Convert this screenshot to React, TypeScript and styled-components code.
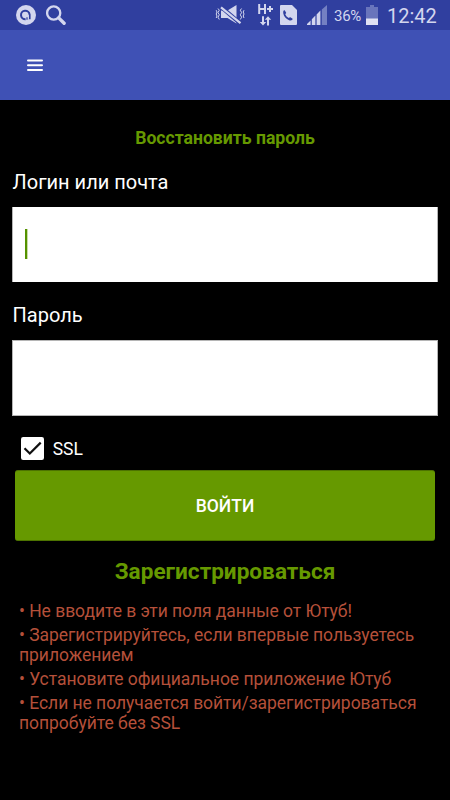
import React from "react"
import styled, { createGlobalStyle } from "styled-components"

const GlobalStyle = createGlobalStyle`
  * {
    box-sizing: border-box;
  }

  body {
    margin: 0;
    background: #000;
    font-family: Roboto, "Noto Sans", sans-serif;
  }
`

const Screen = styled.div`
  width: 450px;
  height: 800px;
  display: flex;
  flex-direction: column;
  overflow: hidden;
  background: #000;
  color: #fff;
`

const StatusBar = styled.div`
  height: 30px;
  flex: none;
  display: flex;
  align-items: center;
  justify-content: space-between;
  padding: 0 14px 0 16px;
  background: #303f9f;
  color: #d3d6ee;
`

const StatusGroup = styled.div`
  display: flex;
  align-items: center;
`

const Icon = styled.svg<{ $gap?: number }>`
  display: block;
  flex: none;
  margin-right: ${props => props.$gap || 0}px;
`

const Battery = styled.span`
  width: 28px;
  margin-right: 4px;
  font-size: 15px;
  line-height: 30px;
  letter-spacing: -0.3px;
  white-space: nowrap;
  padding-top: 2px;
`

const Clock = styled.span`
  width: 49px;
  font-size: 20px;
  line-height: 30px;
  white-space: nowrap;
  padding-top: 2px;
`

const Toolbar = styled.header`
  height: 70px;
  flex: none;
  display: flex;
  align-items: center;
  padding-left: 27px;
  background: #3f51b5;
`

const MenuButton = styled.button`
  padding: 0;
  border: 0;
  background: none;
`

const Form = styled.form`
  display: flex;
  flex-direction: column;
  padding: 26px 12px 0;
`

const Link = styled.a<{ $large?: boolean }>`
  align-self: center;
  color: #669900;
  font-weight: bold;
  font-size: ${props => (props.$large ? 22.6 : 17.6)}px;
  line-height: 24px;
  margin-top: ${props => (props.$large ? 19 : 0)}px;
`

const Label = styled.label`
  font-size: 20px;
  line-height: 24px;
  margin-top: 20px;
  padding-left: 0.6px;
`

const Field = styled.div<{ $last?: boolean }>`
  height: ${props => (props.$last ? 76 : 75)}px;
  display: flex;
  align-items: center;
  margin: 13px 0 ${props => (props.$last ? 20 : 1)}px;
  padding-left: 13px;
  background: #fff;
  border: solid #b5b5b5;
  border-width: ${props => (props.$last ? "1px" : "0 1px")};
`

const Caret = styled.span`
  width: 2px;
  height: 30px;
  margin: 0 0 1px -1px;
  background: #559200;
  box-shadow: 1px 0 #c9dda5;
`

const CheckRow = styled.div`
  height: 24px;
  display: flex;
  align-items: center;
  padding-left: 9px;
  font-size: 17.5px;
`

const CheckLabel = styled.span`
  padding: 1px 0 0 0.7px;
`

const Submit = styled.button`
  height: 71px;
  margin: 10px 3px 0;
  padding: 0;
  border: solid #4d7300;
  border-width: 1px 0;
  border-radius: 3px;
  background: #669900;
  color: #fff;
  font: 500 17.5px/24px Roboto, "Noto Sans", sans-serif;
`

const Notes = styled.div`
  padding: 17px 7px 0;
  color: #b5503a;
  font-size: 17.5px;
  line-height: 20.5px;
  letter-spacing: -0.035px;
`

const Note = styled.p`
  margin: 0 0 3.3px;
  white-space: nowrap;
`

const App: React.FC = () => (
  <Screen>
    <GlobalStyle />

    <StatusBar>
      <StatusGroup>
        <Icon $gap={10} width="20" height="20" viewBox="0 0 20 20">
          <circle cx="10" cy="10" r="10" fill="#d3d6ee" />
          <path
            d="M13.6 14.2V9.6A4.3 4.3 0 1 0 9.6 14.3"
            fill="none"
            stroke="#303f9f"
            strokeWidth="2"
          />
          <circle cx="9.8" cy="9.8" r="2.4" fill="#d3d6ee" />
          <path d="M12.2 10v4.2" stroke="#d3d6ee" strokeWidth="1.4" />
          <path d="M11 12.2v2.6" stroke="#303f9f" strokeWidth="1.2" />
        </Icon>
        <Icon width="20" height="20" viewBox="0 0 20 20" fill="none" stroke="#d3d6ee">
          <circle cx="7.7" cy="8" r="6.6" strokeWidth="2.3" />
          <path d="m12.7 12.9 5.4 5.3" strokeWidth="3.4" strokeLinecap="round" />
        </Icon>
      </StatusGroup>

      <StatusGroup>
        <Icon $gap={12} width="31" height="20" viewBox="0 0 31 20">
          <path d="M6 5.5h6.5L21.5 0v18.5l-9-5.5H6z" fill="#d3d6ee" />
          <path d="M5 1 26 19" stroke="#303f9f" strokeWidth="4.2" />
          <path d="M6 2.3 25.5 18.2" stroke="#d3d6ee" strokeWidth="2.2" />
          <path
            d="M3 3.5 4.3 5.2 3 7.6l1.3 2.2L3 12.2l1.3 2.3M1.2 5.2l.8 1.8-.8 2 .8 2-.8 2M26.6 3.5l-1.3 1.7 1.3 2.4-1.3 2.2 1.3 2.4-1.3 2.3M29 5.2 28.2 7l.8 2-.8 2 .8 2"
            fill="none"
            stroke="#d3d6ee"
            strokeWidth="1"
          />
        </Icon>
        <Icon $gap={7} width="15" height="22" viewBox="0 0 15 22">
          <path
            d="M1.2 0v10M7 0v10M1 5h6M9 5h6M12 2v6"
            fill="none"
            stroke="#d3d6ee"
            strokeWidth="2"
          />
          <path
            d="M4 12.3h2V18h2.2L5 21.5 1.8 18H4zM9 21.5h2v-5.7h2.2L10 12.3l-3.2 3.5H9z"
            fill="#d3d6ee"
          />
        </Icon>
        <Icon $gap={10} width="17" height="20" viewBox="0 0 17 20">
          <path d="M1 0h11l5 5v14a1 1 0 0 1-1 1H1a1 1 0 0 1-1-1V1a1 1 0 0 1 1-1z" fill="#d3d6ee" />
          <path
            d="M3.4 6.1c.3-.8 1-1.1 1.6-.4l1 1.7c.3.5.1 1-.4 1.3l-.4.4c.7 1.9 1.9 3.2 3.7 4l.6-.6c.4-.4.8-.4 1.2-.1l1.6 1.1c.5.4.5.8 0 1.3-.8.9-2 1-3.2.5-3.1-1.4-5.2-3.8-5.8-6.8-.1-.9-.2-1.7.1-2.4z"
            fill="#303f9f"
          />
        </Icon>
        <Icon $gap={7} width="20" height="20" viewBox="0 0 20 20">
          <path d="M0 20v-1l3.6-3.6V20zM4.8 20v-5.8l3.6-3.6V20zM9.6 20V9.4l3.8-3.8V20z" fill="#d3d6ee" />
          <path d="M14.8 20V4.5L20 0v20z" fill="#7480c2" />
        </Icon>
        <Battery>36%</Battery>
        <Icon $gap={9} width="12" height="20" viewBox="0 0 12 20">
          <path d="M4 0h4v2h4v18H0V2h4z" fill="#6975bc" />
          <path d="M0 13.5h12V20H0z" fill="#e0e2f3" />
        </Icon>
        <Clock>12:42</Clock>
      </StatusGroup>
    </StatusBar>

    <Toolbar>
      <MenuButton type="button" aria-label="Меню">
        <Icon width="16" height="14" viewBox="0 0 16 14">
          <path d="M1 2.5h14M1 7.2h14M1 11.9h14" stroke="#fff" strokeWidth="2" strokeLinecap="round" />
        </Icon>
      </MenuButton>
    </Toolbar>

    <Form>
      <Link>Восстановить пароль</Link>

      <Label>Логин или почта</Label>
      <Field>
        <Caret />
      </Field>

      <Label>Пароль</Label>
      <Field $last />

      <CheckRow>
        <Icon $gap={8} width="23" height="23" viewBox="0 0 23 23">
          <rect width="23" height="23" rx="2.2" fill="#fff" />
          <path d="m3.5 11.2 5.3 5.3L19.7 5.6" fill="none" stroke="#101010" strokeWidth="2.2" />
        </Icon>
        <CheckLabel>SSL</CheckLabel>
      </CheckRow>

      <Submit type="button">ВОЙТИ</Submit>

      <Link $large>Зарегистрироваться</Link>

      <Notes>
        <Note>• Не вводите в эти поля данные от Ютуб!</Note>
        <Note>
          • Зарегистрируйтесь, если впервые пользуетесь
          <br />
          приложением
        </Note>
        <Note>• Установите официальное приложение Ютуб</Note>
        <Note>
          • Если не получается войти/зарегистрироваться
          <br />
          попробуйте без SSL
        </Note>
      </Notes>
    </Form>
  </Screen>
)

export default App
